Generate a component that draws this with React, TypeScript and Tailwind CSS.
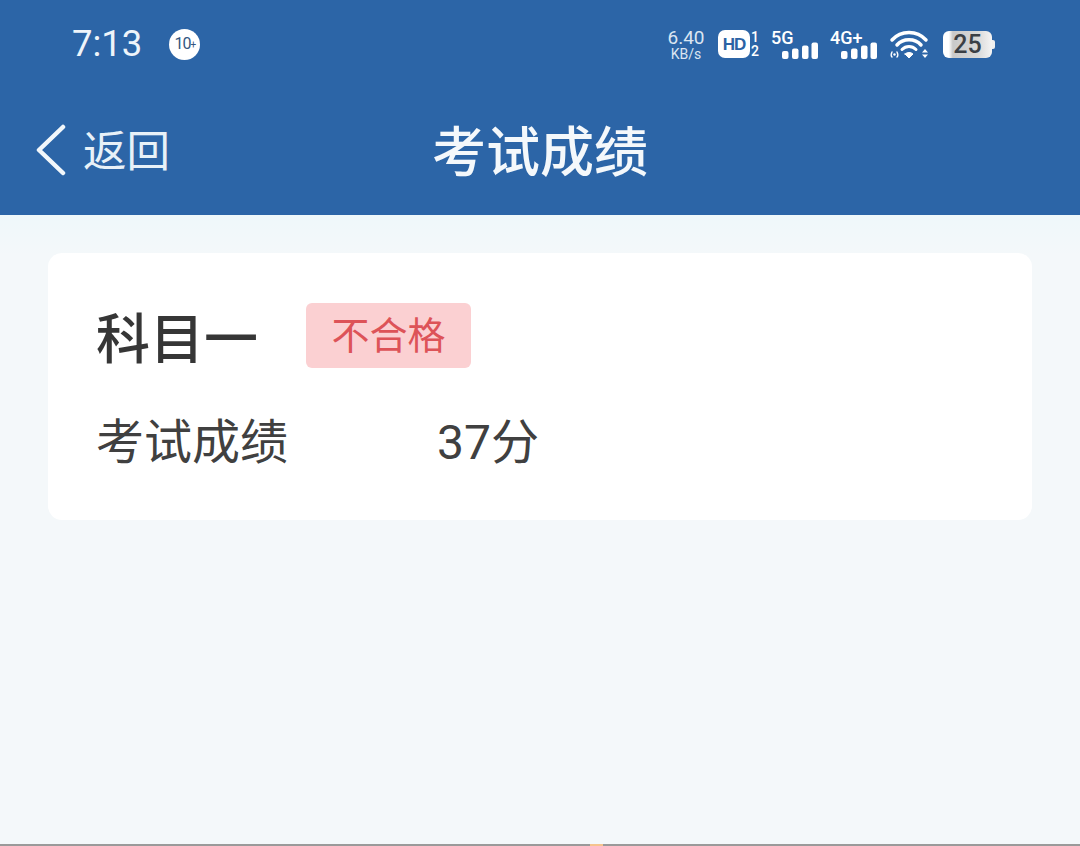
const cjk = "font-['Roboto','Noto_Sans_CJK_SC',sans-serif]";

function SignalBars() {
  return (
    <svg width="36" height="17" viewBox="0 0 36 17" fill="#fff">
      <rect x="0" y="9" width="6.5" height="8" rx="2" />
      <rect x="10" y="6.5" width="6.5" height="10.5" rx="2" />
      <rect x="20" y="3.5" width="6.5" height="13.5" rx="2" />
      <rect x="29.5" y="0.5" width="6.5" height="16.5" rx="2" />
    </svg>
  );
}

function WifiIcon() {
  return (
    <svg width="40" height="30" viewBox="0 0 40 30" fill="none" stroke="#fff" strokeLinecap="round">
      <path d="M3 11C12 1 28 1 37 11" strokeWidth="3.5" />
      <path d="M8 16C14 9 26 9 32 16" strokeWidth="3.5" />
      <path d="M13 20.5C17 16.5 23 16.5 27 20.5" strokeWidth="3" />
      <path d="M16 25L20 29L24 25C22 23 18 23 16 25Z" fill="#fff" strokeWidth="1" />
      <path d="M3 23C2 25 2 27 3 28M8 23C9 25 9 27 8 28" strokeWidth="1.4" />
      <circle cx="5.5" cy="25.5" r="1.2" fill="#fff" stroke="none" />
      <path d="M33 23.5L36 20L39 23.5ZM33 25.5L36 29L39 25.5Z" fill="#fff" stroke="none" />
    </svg>
  );
}

function StatusBar() {
  return (
    <div className="flex h-[88px] items-center pl-[72px] pr-[85px] text-white">
      <span className="text-[36.5px] leading-none font-['Roboto',sans-serif] text-[#eef4fa]">7:13</span>
      <span className="ml-[27px] flex h-[31px] w-[31px] items-center justify-center rounded-full bg-white text-[16px] tracking-[-1px] text-[#33567f] font-['Roboto',sans-serif]">
        10<span className="text-[10px]">+</span>
      </span>
      <div className="ml-auto flex items-center font-['Roboto',sans-serif]">
        <div className="flex w-[42px] flex-col items-center text-[#dbe6f2]">
          <span className="text-[19px] leading-[19px]">6.40</span>
          <span className="text-[14px] leading-[14px]">KB/s</span>
        </div>
        <span className="ml-[11px] flex h-[28px] w-[32px] items-center justify-center rounded-[7px] bg-white text-[17px] font-bold leading-none tracking-[-1px] text-[#2b63a5] font-['Liberation_Sans',sans-serif]">
          HD
        </span>
        <div className="ml-[1px] flex flex-col items-center text-[14px] font-medium leading-[14px]">
          <span>1</span>
          <span>2</span>
        </div>
        <div className="ml-[12px] flex w-[47px] flex-col">
          <span className="text-[18px] font-medium leading-[15px]">5G</span>
          <div className="-mt-[3px] ml-[11px]">
            <SignalBars />
          </div>
        </div>
        <div className="ml-[12px] flex w-[47px] flex-col">
          <span className="text-[18px] font-medium leading-[15px]">4G+</span>
          <div className="-mt-[3px] ml-[11px]">
            <SignalBars />
          </div>
        </div>
        <div className="ml-[12px]">
          <WifiIcon />
        </div>
        <div className="ml-[14px] flex items-center">
          <div className="flex h-[27px] w-[49px] items-center justify-center rounded-[6px] bg-[linear-gradient(90deg,#ffffff_0%,#ffffff_12%,#c9c9c9_20%,#d8d8d8_70%,#f4f4f4_100%)] text-[25px] font-medium leading-none text-[#3a3f45]">
            25
          </div>
          <div className="h-[9px] w-[3px] rounded-r-[2px] bg-[#f0f0f0]" />
        </div>
      </div>
    </div>
  );
}

function NavBar() {
  return (
    <div className={`relative flex h-[127px] items-start justify-center pt-[35px] ${cjk}`}>
      <div className="absolute left-[35px] top-[36px] flex items-center">
        <svg width="32" height="52" viewBox="0 0 32 52" fill="none" stroke="#f2f7fb" strokeWidth="4.5" strokeLinecap="round" strokeLinejoin="round">
          <path d="M28 3L4 26L28 49" />
        </svg>
        <span className="ml-[16px] pt-[5px] text-[43.5px] leading-none text-[#e8f1f8]">返回</span>
      </div>
      <h1 className="text-[54px] font-medium leading-[62px] text-[#f4f8fb]">考试成绩</h1>
    </div>
  );
}

export default function App() {
  return (
    <div className="flex h-[846px] w-[1080px] flex-col overflow-hidden bg-[#f4f8fa]">
      <header className="bg-[#2c65a7]">
        <StatusBar />
        <NavBar />
      </header>

      <main className={`flex-1 bg-[linear-gradient(180deg,#eff8fa_0px,#f4f8fa_40px)] px-[48px] pt-[38px] ${cjk}`}>
        <section className="h-[267px] rounded-[14px] bg-white pl-[48px] pt-[50px]">
          <div className="flex h-[65px] items-start">
            <span className="mt-[5px] w-[210px] text-[54px] font-medium leading-[65px] text-[#363636]">科目一</span>
            <span className="flex h-[65px] w-[165px] items-center justify-center rounded-[6px] bg-[#fbd0d2] text-[38px] leading-none text-[#dd5358]">
              不合格
            </span>
          </div>
          <div className="mt-[45px] flex items-center text-[48px] leading-[60px] text-[#404040]">
            <span className="w-[341px]">考试成绩</span>
            <span>37分</span>
          </div>
        </section>
      </main>

      <div className="h-[2px] bg-[#9a9a9a]">
        <div className="ml-[590px] h-full w-[13px] bg-[#f5c48e]" />
      </div>
    </div>
  );
}
